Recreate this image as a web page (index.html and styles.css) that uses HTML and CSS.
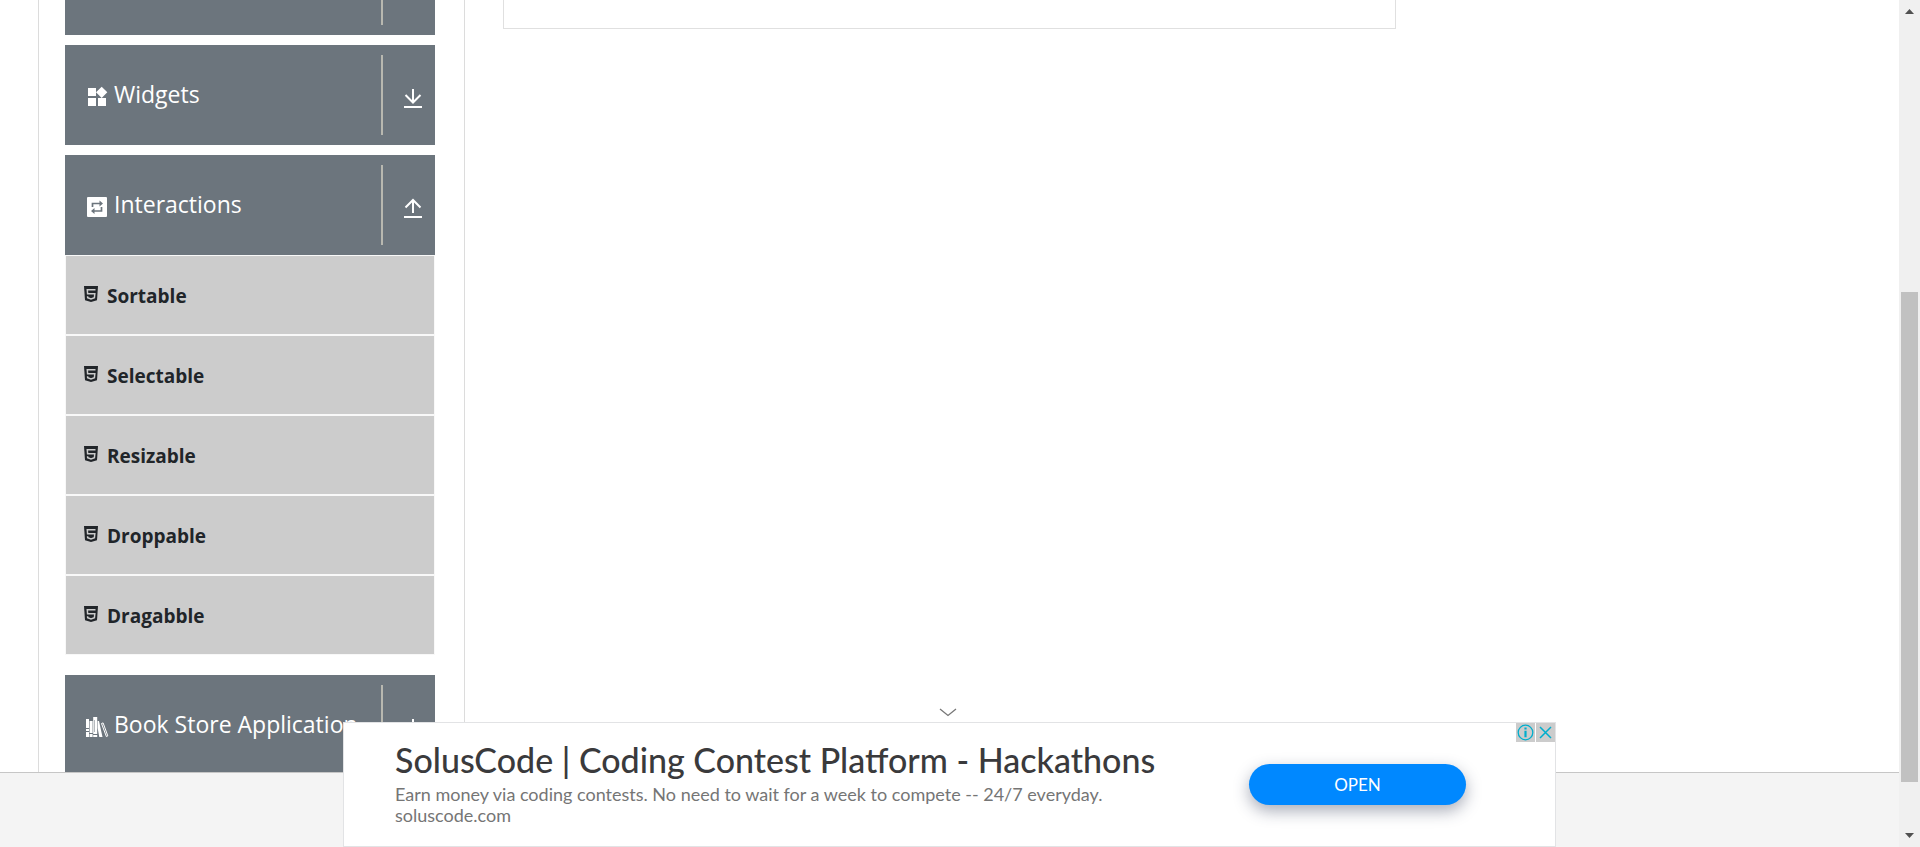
FILE: index.html
```html
<!DOCTYPE html>
<html lang="en">
<head>
<meta charset="utf-8">
<title>Interactions</title>
<link rel="stylesheet" href="styles.css">
</head>
<body>
<svg class="defs" aria-hidden="true">
  <symbol id="down" viewBox="0 0 24 24"><path d="M12 3v13M4.500 9l7.500 7.500L19.500 9" fill="none" stroke="currentColor" stroke-width="2"/><path d="M3 20h18v2H3z" fill="currentColor"/></symbol>
  <symbol id="up" viewBox="0 0 24 24"><path d="M12 17V4M4.500 11.500L12 4l7.500 7.500" fill="none" stroke="currentColor" stroke-width="2"/><path d="M3 20h18v2H3z" fill="currentColor"/></symbol>
  <symbol id="html5" viewBox="0 0 16 16"><path fill="currentColor" d="M1 0h14l-1 14.200L8 16l-6-1.800z"/><path fill="none" stroke="#ccc" stroke-width="1.500" d="M12.500 3.700H4.300l.3 4h7.200l-.4 4.100L8 12.900l-3.300-1.100-.1-1.600"/></symbol>
</svg>
<div class="page">
  <div class="main">
    <nav class="sidebar">
      <div class="group first"><button class="head" aria-label="Alerts, Frame &amp; Windows"><span class="label"></span><span class="toggle"></span></button></div>
      <div class="group">
        <button class="head">
          <span class="label"><svg class="icon" viewBox="0 0 24 24"><path fill="currentColor" d="M13 13v8h8v-8zM3 21h8v-8H3zM3 3v8h8V3zM16.700 1.700L11 7.300l5.700 5.700 5.600-5.700z"/></svg>Widgets</span>
          <span class="toggle"><svg><use href="#down"/></svg></span>
        </button>
      </div>
      <div class="group">
        <button class="head" aria-expanded="true">
          <span class="label"><svg class="icon" viewBox="0 0 24 24"><rect x="2" y="2" width="20" height="20" rx="1" fill="currentColor"/><g fill="none" stroke="#6c757d" stroke-width="1.700"><path d="M7.500 12V8.500H16M16.500 12v4H8"/></g><path fill="#6c757d" d="M14.500 5.500l3.500 3-3.500 3zM9.500 13l-3.500 3 3.500 3z"/></svg>Interactions</span>
          <span class="toggle"><svg><use href="#up"/></svg></span>
        </button>
        <ul class="items">
          <li><svg><use href="#html5"/></svg>Sortable</li>
          <li><svg><use href="#html5"/></svg>Selectable</li>
          <li><svg><use href="#html5"/></svg>Resizable</li>
          <li><svg><use href="#html5"/></svg>Droppable</li>
          <li><svg><use href="#html5"/></svg>Dragabble</li>
        </ul>
      </div>
      <div class="group">
        <button class="head">
          <span class="label"><svg class="icon" viewBox="0 0 24 24"><path fill="currentColor" d="M1 4h3v9H1zM1 14h3v2H1zM1 17h3v5H1zM4.600 6h3v12h-3zM4.600 19h3v3h-3zM12.600 6h1.400l3.500 16h-3.200L12.600 13z"/><path fill="currentColor" d="M8.200 2h4v17h-4zM8.200 20h4v2h-4z"/><path fill="none" stroke="currentColor" stroke-width="1" d="M16.500 8.500l1.600-.6 4.700 13-1.400.7z"/><path fill="#6c757d" d="M9 5h.5v12H9z"/></svg>Book Store Application</span>
          <span class="toggle"><svg><use href="#down"/></svg></span>
        </button>
      </div>
    </nav>
    <div class="card"></div>
  </div>
  <footer class="footer"></footer>
  <aside class="ad">
    <button class="collapse" aria-label="Collapse"><svg viewBox="0 0 18 9"><path d="M1 1l8 6.500L17 1" fill="none" stroke="#777" stroke-width="1.300"/></svg></button>
    <div class="copy">
      <h2>SolusCode | Coding Contest Platform - Hackathons</h2>
      <p>Earn money via coding contests. No need to wait for a week to compete -- 24/7 everyday.</p>
      <p>soluscode.com</p>
    </div>
    <button class="open">OPEN</button>
    <div class="choices">
      <button aria-label="Ad information"><svg viewBox="0 0 19 19"><circle cx="9.500" cy="9.500" r="7.300" fill="none" stroke="#00aecd" stroke-width="1.300"/><path fill="#00aecd" d="M8.400 4.500h2.200v2H8.400zM8.400 7.800h2.200v6.500H8.400z"/></svg></button>
      <button aria-label="Close ad"><svg viewBox="0 0 19 19"><path d="M4 4l11 11M15 4L4 15" stroke="#00aecd" stroke-width="1.500"/></svg></button>
    </div>
  </aside>
</div>
<div class="scrollbar" aria-hidden="true">
  <svg viewBox="0 0 9 5"><path fill="#505050" d="M4.500 0L9 5H0z"/></svg>
  <span class="thumb"></span>
  <svg viewBox="0 0 9 5"><path fill="#505050" d="M0 0h9L4.500 5z"/></svg>
</div>
</body>
</html>
```
FILE: styles.css
```css
* { box-sizing: border-box; }
body {
  margin: 0;
  height: 100vh;
  display: flex;
  overflow: hidden;
  background: #fff;
  color: #212529;
  font-family: "Open Sans", "Noto Sans", sans-serif;
}
button { border: 0; padding: 0; font: inherit; color: inherit; background: none; }
svg { display: block; flex: none; }
.defs { position: absolute; width: 0; height: 0; }
.page { flex: 1; position: relative; display: flex; flex-direction: column; min-width: 0; }
.main { flex: 1; min-height: 0; overflow: hidden; display: flex; padding-left: 38px; }
.sidebar {
  flex: none;
  width: 427px;
  padding: 0 29px 0 26px;
  border: 1px solid #dcdcdc;
  border-width: 0 1px;
}
.group { margin-bottom: 10px; }
.group:has(.items) { margin-bottom: 20px; }
.group.first { margin-top: -65px; }
.head {
  width: 100%;
  height: 100px;
  padding: 10px 0;
  display: flex;
  background: #6c757d;
  color: #fff;
  font-size: 23px;
  line-height: 30px;
  text-align: left;
  white-space: nowrap;
}
.label { flex: 1; min-width: 0; display: flex; align-items: center; gap: 5px; padding: 0 0 2px 20px; }
.icon { width: 24px; height: 24px; margin-top: 6px; }
.toggle {
  width: 54px;
  border-left: 2px solid #b8b8b0;
  display: flex;
  align-items: center;
  justify-content: center;
  padding: 6px 0 0 8px;
  height: 80px;
}
.toggle svg { width: 24px; height: 24px; }
.items { list-style: none; margin: 0; padding: 0; }
.items li {
  height: 80px;
  padding: 2px 17px 0;
  display: flex;
  align-items: center;
  gap: 8px;
  border: 1px solid #f8f8f8;
  background: #ccc;
  font-size: 19px;
  font-weight: 700;
}
.items svg { width: 16px; height: 16px; margin-bottom: 4px; }
.card { width: 893px; height: 29px; margin-left: 38px; border: 1px solid #e0e0e0; border-top: 0; }
.footer { height: 75px; background: #f4f4f4; border-top: 1px solid #c6c6c6; }
.ad {
  position: absolute;
  bottom: 0;
  left: 0;
  right: 0;
  margin: 0 auto;
  width: 1213px;
  height: 125px;
  padding: 0 89px 0 51px;
  display: flex;
  align-items: center;
  justify-content: space-between;
  background: #fff;
  border: 1px solid #e2e3e5;
  font-family: Lato, sans-serif;
}
.copy { padding-bottom: 4px; }
.copy h2 { margin: 0 0 4px; font-size: 34px; line-height: 40px; font-weight: 500; color: #3a3a3c; }
.copy p { margin: 0; font-size: 18px; line-height: 21px; color: #757575; }
.open {
  width: 217px;
  height: 41px;
  border-radius: 21px;
  background: #0088ff;
  color: #fff;
  font-size: 17px;
  box-shadow: 0 6px 16px rgba(40, 50, 80, .4);
}
.choices { position: absolute; top: 0; right: 0; display: flex; gap: 1px; }
.choices button { width: 19px; height: 19px; background: #ccc; }
.collapse { position: absolute; top: -15px; left: 595px; }
.collapse svg { width: 18px; height: 9px; }
.scrollbar {
  width: 21px;
  flex: none;
  background: #f0f0f0;
  display: flex;
  flex-direction: column;
  align-items: center;
  gap: 51px;
  padding: 9px 0;
}
.scrollbar svg { width: 9px; height: 5px; }
.thumb { width: 17px; height: 490px; margin-top: auto; background: #c1c1c1; }
```
